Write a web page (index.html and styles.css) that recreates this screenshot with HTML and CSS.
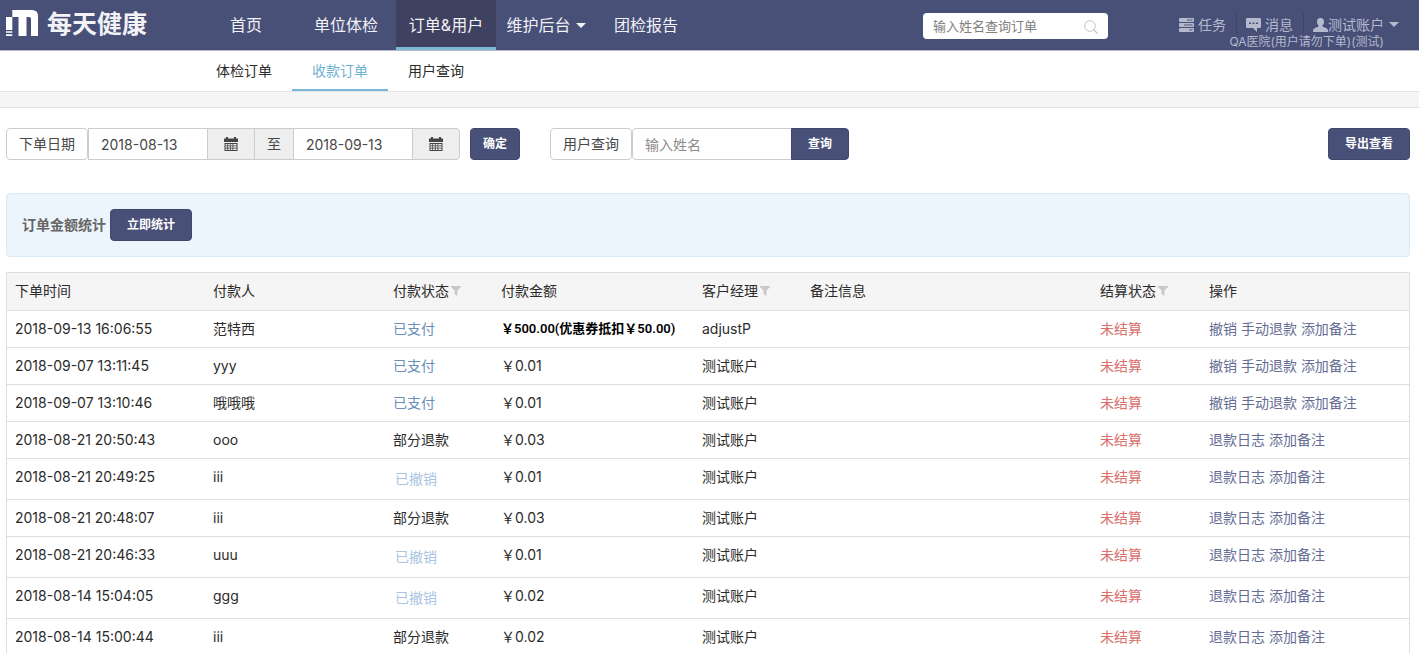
FILE: index.html
```
<!DOCTYPE html>
<html lang="zh-CN">
<head>
<meta charset="utf-8">
<meta name="viewport" content="width=device-width, initial-scale=1">
<title>收款订单 - 每天健康</title>
<link rel="stylesheet" href="styles.css">
</head>
<body>
<svg class="sprite" aria-hidden="true">
  <symbol id="funnel" viewBox="0 0 10 10"><path d="M0 0H10V1L6.4 4.6V10L3.6 8V4.6L0 1Z"/></symbol>
  <symbol id="calendar" viewBox="0 0 14 14"><path fill-rule="evenodd" d="M0 1.500H2V0H4V1.500H10V0H12V1.500H14V5H0ZM0.500 6H13.500V14H0.500ZM1.500 7V8.500H3.300V7ZM4.100 7V8.500H5.900V7ZM6.700 7V8.500H8.500V7ZM9.300 7V8.500H12.500V7ZM1.500 9.300V10.800H3.300V9.300ZM4.100 9.300V10.800H5.900V9.300ZM6.700 9.300V10.800H8.500V9.300ZM9.300 9.300V10.800H12.500V9.300ZM1.500 11.600V13H3.300V11.600ZM4.100 11.600V13H5.900V11.600ZM6.700 11.600V13H8.500V11.600ZM9.300 11.600V13H12.500V11.600Z"/></symbol>
</svg>
<header class="topbar">
  <a class="brand" href="#">
    <svg class="brand-mark" viewBox="0 0 32 26" aria-hidden="true"><path fill="#fff" d="M0 7H6.300V20H0ZM6.300 0H26Q32 0 32 6V26H25V9Q25 7 23 7H20.500V26H12.500V7H6.300ZM0 21.300H6.300V22.800H0ZM0 24.200H6.300V26H0Z"/></svg>
    <span class="brand-name">每天健康</span>
  </a>
  <nav class="mainnav">
    <a href="#">首页</a>
    <a href="#">单位体检</a>
    <a href="#" class="active">订单&amp;用户</a>
    <a href="#">维护后台<span class="caret"></span></a>
    <a href="#">团检报告</a>
  </nav>
  <form class="search">
    <input type="text" placeholder="输入姓名查询订单" aria-label="输入姓名查询订单">
    <button type="button" aria-label="搜索"><svg width="14" height="14" viewBox="0 0 14 14"><circle cx="6" cy="6" r="5.300" fill="none" stroke="#c4c4c8"/><path d="M9.800 9.800L13.500 13.500" stroke="#c4c4c8" stroke-width="1.300"/></svg></button>
  </form>
  <div class="account">
    <div class="account-links">
      <a href="#"><svg width="15" height="14" viewBox="0 0 15 14"><path fill="currentColor" fill-rule="evenodd" d="M1 0H14Q15 0 15 1V3Q15 4 14 4H1Q0 4 0 3V1Q0 0 1 0ZM8 1.500V2.500H13.500V1.500ZM1 5H14Q15 5 15 6V8Q15 9 14 9H1Q0 9 0 8V6Q0 5 1 5ZM5 6.500V7.500H13.500V6.500ZM1 10H14Q15 10 15 11V13Q15 14 14 14H1Q0 14 0 13V11Q0 10 1 10ZM10 11.500V12.500H13.500V11.500Z"/></svg><span>任务</span></a>
      <a href="#"><svg width="15" height="14" viewBox="0 0 15 14"><path fill="currentColor" fill-rule="evenodd" d="M1 0H14Q15 0 15 1V9Q15 10 14 10H11V14L7 10H1Q0 10 0 9V1Q0 0 1 0ZM3 4.500V6H5V4.500ZM6.500 4.500V6H8.500V4.500ZM10 4.500V6H12V4.500Z"/></svg><span>消息</span></a>
      <a href="#" class="user"><svg width="15" height="14" viewBox="0 0 15 14"><path fill="currentColor" d="M7.500 0C10 0 11 1.700 11 3.700C11 5.400 10.300 6.700 9.500 7.400V8.600L13.500 10.300Q15 11 15 12.500V14H0V12.500Q0 11 1.500 10.300L5.500 8.600V7.400C4.700 6.700 4 5.400 4 3.700C4 1.700 5 0 7.500 0Z"/></svg><span>测试账户</span><span class="caret"></span></a>
    </div>
    <div class="hospital">QA医院(用户请勿下单)(测试)</div>
  </div>
</header>
<nav class="subnav">
  <a href="#">体检订单</a>
  <a href="#" class="active">收款订单</a>
  <a href="#">用户查询</a>
</nav>
<div class="band"></div>
<main>
  <form class="filters">
    <div class="group dates">
      <label class="tag" for="from">下单日期</label>
      <input id="from" class="date" type="text" value="2018-08-13">
      <button type="button" class="addon" aria-label="选择开始日期"><svg width="14" height="14"><use href="#calendar"/></svg></button>
      <label class="to" for="to">至</label>
      <input id="to" class="date" type="text" value="2018-09-13">
      <button type="button" class="addon last" aria-label="选择结束日期"><svg width="14" height="14"><use href="#calendar"/></svg></button>
    </div>
    <button type="button" class="btn small">确定</button>
    <div class="group users">
      <label class="tag" for="name">用户查询</label>
      <input id="name" class="name" type="text" placeholder="输入姓名">
      <button type="button" class="btn joined">查询</button>
    </div>
    <button type="button" class="btn export">导出查看</button>
  </form>
  <section class="stats">
    <strong>订单金额统计</strong>
    <button type="button" class="btn">立即统计</button>
  </section>
  <table class="orders">
    <colgroup><col class="c-time"><col class="c-payer"><col class="c-state"><col class="c-amount"><col class="c-state"><col><col class="c-settle"><col class="c-actions"></colgroup>
    <thead>
      <tr><th>下单时间</th><th>付款人</th><th>付款状态<svg class="funnel"><use href="#funnel"/></svg></th><th>付款金额</th><th>客户经理<svg class="funnel"><use href="#funnel"/></svg></th><th>备注信息</th><th>结算状态<svg class="funnel"><use href="#funnel"/></svg></th><th>操作</th></tr>
    </thead>
    <tbody>
      <tr><td>2018-09-13 16:06:55</td><td>范特西</td><td class="paid">已支付</td><td class="coupon">￥500.00(优惠券抵扣￥50.00)</td><td>adjustP</td><td></td><td class="unsettled">未结算</td><td><a href="#">撤销</a> <a href="#">手动退款</a> <a href="#">添加备注</a></td></tr>
      <tr><td>2018-09-07 13:11:45</td><td>yyy</td><td class="paid">已支付</td><td>￥0.01</td><td>测试账户</td><td></td><td class="unsettled">未结算</td><td><a href="#">撤销</a> <a href="#">手动退款</a> <a href="#">添加备注</a></td></tr>
      <tr><td>2018-09-07 13:10:46</td><td>哦哦哦</td><td class="paid">已支付</td><td>￥0.01</td><td>测试账户</td><td></td><td class="unsettled">未结算</td><td><a href="#">撤销</a> <a href="#">手动退款</a> <a href="#">添加备注</a></td></tr>
      <tr><td>2018-08-21 20:50:43</td><td>ooo</td><td>部分退款</td><td>￥0.03</td><td>测试账户</td><td></td><td class="unsettled">未结算</td><td><a href="#">退款日志</a> <a href="#">添加备注</a></td></tr>
      <tr><td>2018-08-21 20:49:25</td><td>iii</td><td><span class="revoked">已撤销</span></td><td>￥0.01</td><td>测试账户</td><td></td><td class="unsettled">未结算</td><td><a href="#">退款日志</a> <a href="#">添加备注</a></td></tr>
      <tr><td>2018-08-21 20:48:07</td><td>iii</td><td>部分退款</td><td>￥0.03</td><td>测试账户</td><td></td><td class="unsettled">未结算</td><td><a href="#">退款日志</a> <a href="#">添加备注</a></td></tr>
      <tr><td>2018-08-21 20:46:33</td><td>uuu</td><td><span class="revoked">已撤销</span></td><td>￥0.01</td><td>测试账户</td><td></td><td class="unsettled">未结算</td><td><a href="#">退款日志</a> <a href="#">添加备注</a></td></tr>
      <tr><td>2018-08-14 15:04:05</td><td>ggg</td><td><span class="revoked">已撤销</span></td><td>￥0.02</td><td>测试账户</td><td></td><td class="unsettled">未结算</td><td><a href="#">退款日志</a> <a href="#">添加备注</a></td></tr>
      <tr><td>2018-08-14 15:00:44</td><td>iii</td><td>部分退款</td><td>￥0.02</td><td>测试账户</td><td></td><td class="unsettled">未结算</td><td><a href="#">退款日志</a> <a href="#">添加备注</a></td></tr>
    </tbody>
  </table>
</main>
</body>
</html>
```
FILE: styles.css
```
* { box-sizing: border-box; }
html { scrollbar-width: none; }
body {
  margin: 0;
  background: #fff;
  color: #2b2b2b;
  font: 14px/20px Inter, "Noto Sans CJK SC", sans-serif;
}
a { color: inherit; text-decoration: none; }
input, button { font: inherit; margin: 0; }
svg { flex: none; }
.sprite { display: none; }

.topbar {
  display: flex;
  height: 51px;
  background: #485078;
  border-bottom: 1px solid #b9bccb;
  color: #f2f2f7;
}
.brand { display: flex; width: 196px; padding: 10px 0 0 6px; gap: 9px; }
.brand-mark { width: 32px; height: 26px; }
.brand-name { font-size: 25px; line-height: 28px; font-weight: 700; }
.mainnav { display: flex; }
.mainnav a {
  display: flex;
  align-items: center;
  justify-content: center;
  gap: 5px;
  width: 100px;
  height: 50px;
  font-size: 16px;
  border-bottom: 3px solid transparent;
  border-top: 3px solid transparent;
}
.mainnav .active { background: #3e4160; border-top-color: #3e4160; border-bottom-color: #7cb8d8; }
.caret { border: 5px solid transparent; border-top-color: currentColor; border-bottom-width: 0; }
.search {
  display: flex;
  align-items: center;
  width: 185px;
  height: 26px;
  margin: 13px 0 0 auto;
  background: #fff;
  border-radius: 4px;
}
.search input {
  flex: 1;
  min-width: 0;
  padding: 0 0 0 10px;
  border: 0;
  background: none;
  font-size: 13px;
}
.search input::placeholder { color: #808080; }
.search button { display: flex; padding: 1px 10px 0 0; border: 0; background: none; }
.account {
  display: flex;
  flex-direction: column;
  align-items: flex-end;
  width: 311px;
  padding: 12px 20px 0 0;
  color: #b5b9ce;
}
.account-links { display: flex; height: 22px; }
.account-links a { display: flex; align-items: center; gap: 4px; padding: 3px 10px 0 9px; border-right: 1px solid #3f466b; }
.account-links .user { gap: 0; padding-right: 0; border: 0; }
.account-links .caret { margin-left: 5px; }
.hospital { padding-right: 15px; font-size: 12px; line-height: 16px; }

.subnav { display: flex; height: 41px; padding-left: 196px; border-bottom: 1px solid #e2e2e2; }
.subnav a { padding: 10px 20px 8px; border-bottom: 2px solid transparent; }
.subnav .active { color: #6fb1d3; border-color: #7cb8d8; }
.band { height: 16px; background: #f5f5f5; border-bottom: 1px solid #e2e2e2; }

main { padding: 20px 9px 0 6px; }
.filters { display: flex; align-items: flex-start; color: #484848; }
.group { display: flex; height: 32px; }
.tag, .to, .addon, .group input { border: 1px solid #ccc; background: #fff; }
.tag { width: 82px; padding: 5px 0; text-align: center; border-radius: 4px; }
.group input { min-width: 0; padding: 2px 12px 0; color: #484848; }
.group .date { width: 120px; }
.addon {
  display: flex;
  align-items: center;
  justify-content: center;
  width: 48px;
  margin-left: -1px;
  padding: 0;
  background: #eee;
  fill: #444;
}
.addon.last { border-radius: 0 4px 4px 0; }
.to { width: 40px; margin: 0 -1px; padding: 5px 0; background: #eee; text-align: center; }
.group .name { width: 160px; border-radius: 4px 0 0 4px; }
.name::placeholder { color: #8c8c8c; }
.btn {
  height: 32px;
  padding: 0 16px;
  border: 1px solid #40476c;
  border-radius: 4px;
  background: #485078;
  color: #fff;
  font-size: 12px;
  font-weight: 700;
}
.btn.small { width: 50px; padding: 0; margin: 0 30px 0 10px; }
.btn.joined { margin-left: -1px; border-radius: 0 4px 4px 0; }
.export { margin-left: auto; }

.stats {
  display: flex;
  align-items: center;
  gap: 4px;
  height: 64px;
  margin: 33px 0 15px;
  padding: 0 15px;
  border: 1px solid #dce9f6;
  border-radius: 4px;
  background: #ecf4fc;
  color: #666;
}

.orders { width: 100%; table-layout: fixed; border-collapse: separate; border-spacing: 0; border: 1px solid #ddd; }
.c-time { width: 198px; }
.c-payer { width: 180px; }
.c-state { width: 108px; }
.c-settle { width: 109px; }
.c-amount { width: 201px; }
.c-actions { width: 208px; }
.orders th, .orders td {
  padding: 8px;
  border-bottom: 1px solid #ddd;
  text-align: left;
  vertical-align: top;
  font-weight: 400;
  white-space: nowrap;
}
.orders th { padding-bottom: 9px; background: #f5f5f5; }
.funnel { width: 10px; height: 10px; margin-left: 2px; fill: #c8c8c8; }
.paid { color: #6a8fb8; }
.orders .coupon { color: #000; font-family: Roboto, "Noto Sans CJK SC", sans-serif; font-size: 13px; font-weight: 600; }
.unsettled { color: #d9706c; }
.orders a { color: #666d94; }
.revoked { display: block; padding: 2px; color: #a9c4e2; }
```
